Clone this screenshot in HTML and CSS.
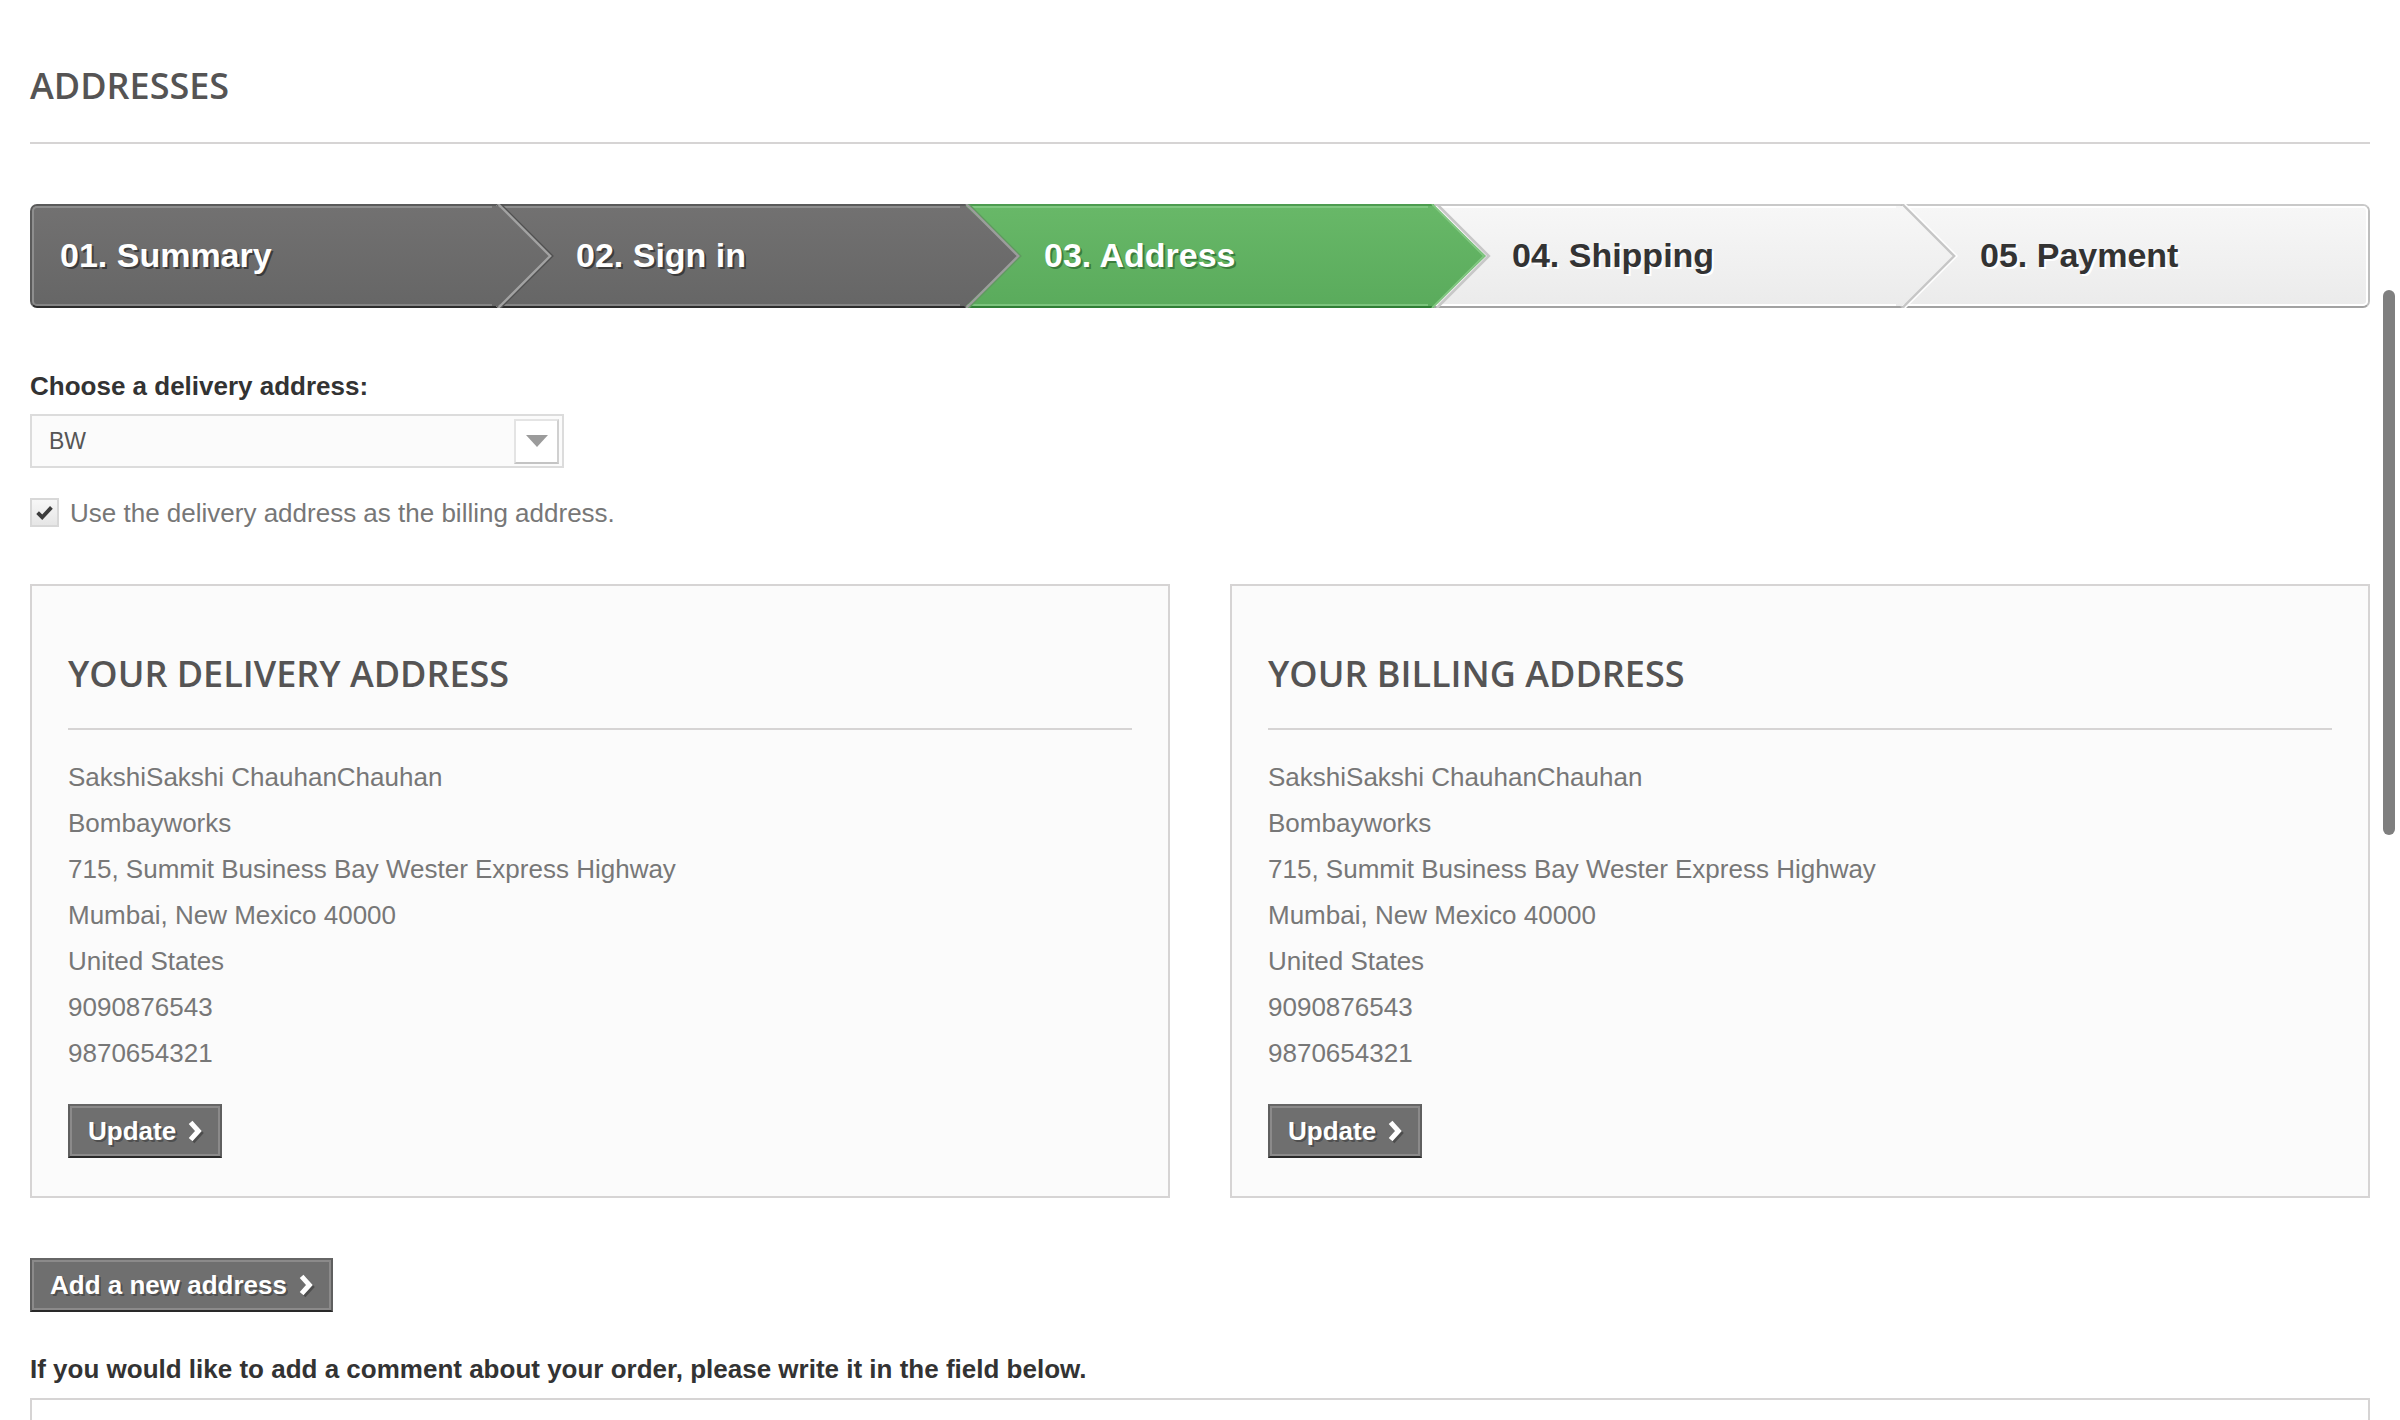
FILE: index.html
```html
<!DOCTYPE html>
<html lang="en">
<head>
<meta charset="utf-8">
<title>Addresses</title>
<link rel="stylesheet" href="styles.css">
</head>
<body>
<div class="page">
  <h1 class="page-heading">Addresses</h1>

  <ul class="steps">
    <li class="step done first">
      <span class="step-label">01. Summary</span>
      <svg class="step-arrow" width="64" height="104" viewBox="0 0 64 104">
        <defs><linearGradient id="gd1" x1="0" y1="0" x2="0" y2="1"><stop offset="0" stop-color="#727171"/><stop offset="1" stop-color="#666666"/></linearGradient></defs>
        <polygon points="0,2 6,2 58,52 6,102 0,102" fill="url(#gd1)"/>
        <polyline points="8.6,0 60.6,52 8.6,104" fill="none" stroke="#505050" stroke-width="1.8"/>
        <polyline points="6.2,0 58.2,52 6.2,104" fill="none" stroke="#a2a2a2" stroke-width="2.4"/>
      </svg>
    </li>
    <li class="step done">
      <span class="step-label">02. Sign in</span>
      <svg class="step-arrow" width="64" height="104" viewBox="0 0 64 104">
        <defs><linearGradient id="gd2" x1="0" y1="0" x2="0" y2="1"><stop offset="0" stop-color="#727171"/><stop offset="1" stop-color="#666666"/></linearGradient></defs>
        <polygon points="0,2 6,2 58,52 6,102 0,102" fill="url(#gd2)"/>
        <polyline points="8.6,0 60.6,52 8.6,104" fill="none" stroke="#5f9a5f" stroke-width="1.8"/>
        <polyline points="6.2,0 58.2,52 6.2,104" fill="none" stroke="#9c9c9c" stroke-width="2.4"/>
      </svg>
    </li>
    <li class="step current">
      <span class="step-label">03. Address</span>
      <svg class="step-arrow" width="64" height="104" viewBox="0 0 64 104">
        <defs><linearGradient id="gc" x1="0" y1="0" x2="0" y2="1"><stop offset="0" stop-color="#68b868"/><stop offset="1" stop-color="#5aab5c"/></linearGradient></defs>
        <polygon points="0,2 6,2 58,52 6,102 0,102" fill="url(#gc)"/>
        <polyline points="8.8,0 60.8,52 8.8,104" fill="none" stroke="#c7c7c7" stroke-width="2.6"/>
        <polyline points="4,0 56,52 4,104" fill="none" stroke="#80c680" stroke-width="2"/>
      </svg>
    </li>
    <li class="step todo">
      <span class="step-label">04. Shipping</span>
      <svg class="step-arrow" width="64" height="104" viewBox="0 0 64 104">
        <defs><linearGradient id="gt" x1="0" y1="0" x2="0" y2="1"><stop offset="0" stop-color="#f7f7f7"/><stop offset="1" stop-color="#ebebeb"/></linearGradient></defs>
        <polygon points="0,2 6,2 58,52 6,102 0,102" fill="url(#gt)"/>
        <polyline points="8.6,0 60.6,52 8.6,104" fill="none" stroke="#ffffff" stroke-width="2"/>
        <polyline points="6.2,0 58.2,52 6.2,104" fill="none" stroke="#c6c6c6" stroke-width="2.4"/>
      </svg>
    </li>
    <li class="step todo last">
      <span class="step-label">05. Payment</span>
    </li>
  </ul>

  <label class="field-label">Choose a delivery address:</label>
  <div class="select">
    <span class="select-value">BW</span>
    <span class="select-btn">
      <svg width="22" height="12" viewBox="0 0 22 12"><polygon points="0,0 22,0 11,12" fill="#9b9b9b"/></svg>
    </span>
  </div>

  <div class="check-row">
    <span class="checkbox">
      <svg width="17" height="15" viewBox="0 0 17 15"><polyline points="1.6,7.6 6.2,12.2 15.4,2.4" fill="none" stroke="#3c3c3c" stroke-width="3.8"/></svg>
    </span>
    <span class="check-text">Use the delivery address as the billing address.</span>
  </div>

  <div class="addresses">
    <div class="address-box">
      <h3 class="address-title">Your delivery address</h3>
      <ul class="address-lines">
        <li>SakshiSakshi ChauhanChauhan</li>
        <li>Bombayworks</li>
        <li>715, Summit Business Bay Wester Express Highway</li>
        <li>Mumbai, New Mexico 40000</li>
        <li>United States</li>
        <li>9090876543</li>
        <li>9870654321</li>
      </ul>
      <div class="box-actions">
        <a class="button" href="#"><span class="button-inner">Update<svg class="chev" width="14" height="22" viewBox="0 0 14 22"><polyline points="2.6,2.4 10.4,11 2.6,19.6" fill="none" stroke="#ffffff" stroke-width="5"/></svg></span></a>
      </div>
    </div>
    <div class="address-box">
      <h3 class="address-title">Your billing address</h3>
      <ul class="address-lines">
        <li>SakshiSakshi ChauhanChauhan</li>
        <li>Bombayworks</li>
        <li>715, Summit Business Bay Wester Express Highway</li>
        <li>Mumbai, New Mexico 40000</li>
        <li>United States</li>
        <li>9090876543</li>
        <li>9870654321</li>
      </ul>
      <div class="box-actions">
        <a class="button" href="#"><span class="button-inner">Update<svg class="chev" width="14" height="22" viewBox="0 0 14 22"><polyline points="2.6,2.4 10.4,11 2.6,19.6" fill="none" stroke="#ffffff" stroke-width="5"/></svg></span></a>
      </div>
    </div>
  </div>

  <div class="page-actions">
    <a class="button" href="#"><span class="button-inner">Add a new address<svg class="chev" width="14" height="22" viewBox="0 0 14 22"><polyline points="2.6,2.4 10.4,11 2.6,19.6" fill="none" stroke="#ffffff" stroke-width="5"/></svg></span></a>
  </div>

  <p class="comment-label">If you would like to add a comment about your order, please write it in the field below.</p>
  <div class="textarea"></div>
</div>
<div class="scroll-thumb"></div>
</body>
</html>
```

FILE: styles.css
```css
* {
  box-sizing: border-box;
}

html,
body {
  margin: 0;
  padding: 0;
  height: 1420px;
  overflow: hidden;
  background: #ffffff;
}

body {
  font-family: "Liberation Sans", Arial, Helvetica, sans-serif;
  font-size: 26px;
  color: #777777;
}

.page {
  padding: 64px 30px 0;
}

.page-heading {
  margin: 0 0 60px;
  padding: 0 0 34px;
  border-bottom: 2px solid #d6d4d4;
  font-family: "Open Sans", sans-serif;
  font-weight: 600;
  font-size: 36px;
  line-height: 44px;
  color: #555454;
  text-transform: uppercase;
}

/* ---------- steps ---------- */
.steps {
  display: flex;
  list-style: none;
  margin: 0 0 60px;
  padding: 0;
}

.step {
  position: relative;
  flex: 0 0 20%;
  border-top: 2px solid;
  border-bottom: 2px solid;
  border-right: 2px solid;
}

.step.first {
  border-left: 2px solid;
  border-radius: 7px 0 0 7px;
}

.step.last {
  border-radius: 0 7px 7px 0;
}

.step-label {
  display: block;
  padding: 26px 20px 28px 76px;
  border: 2px solid;
  font-weight: bold;
  font-size: 34px;
  line-height: 42px;
}

.step.first .step-label {
  padding-left: 26px;
  border-radius: 5px 0 0 5px;
}

.step.last .step-label {
  border-radius: 0 5px 5px 0;
}

.step.done {
  border-color: #5a5a5a #5f5f5f #2c2c2c #5a5a5a;
  background: linear-gradient(#727171, #666666);
}

.step.done .step-label {
  color: #ffffff;
  border-color: #8e8e8e #858585 #858585 #8e8e8e;
  text-shadow: 2px 2px 0 rgba(0, 0, 0, 0.45);
}

.step.current {
  border-color: #4d9c50 #3f9043 #2f7e35 #4d9c50;
  background: linear-gradient(#68b868, #5aab5c);
}

.step.current .step-label {
  color: #ffffff;
  border-color: #80c881 #7cc47d #7cc47d #80c881;
  text-shadow: 2px 2px 0 #3a7d3d;
}

.step.todo {
  border-color: #c9c9c9 #bebebe #a2a2a2 #c9c9c9;
  background: linear-gradient(#f7f7f7, #ebebeb);
}

.step.todo .step-label {
  color: #333333;
  border-color: #ffffff;
  text-shadow: 2px 2px 0 #ffffff;
}

.step-arrow {
  position: absolute;
  z-index: 2;
  top: -2px;
  left: calc(100% - 4px);
  display: block;
}

/* ---------- delivery select ---------- */
.field-label {
  display: block;
  margin: 0 0 10px;
  font-weight: bold;
  line-height: 36px;
  color: #333333;
}

.select {
  display: flex;
  align-items: center;
  width: 534px;
  height: 54px;
  padding: 0 3px 0 17px;
  border: 2px solid #dcdcdc;
  background: #fbfbfb;
}

.select-value {
  flex: 1;
  font-size: 23px;
  line-height: 50px;
  color: #555555;
}

.select-btn {
  display: flex;
  align-items: center;
  justify-content: center;
  width: 45px;
  height: 45px;
  border: 2px solid;
  border-color: #e4e4e4 #d0d0d0 #c4c4c4 #e4e4e4;
  background: #ffffff;
}

.check-row {
  display: flex;
  align-items: center;
  gap: 11px;
  margin-top: 30px;
}

.checkbox {
  display: flex;
  align-items: center;
  justify-content: center;
  width: 29px;
  height: 29px;
  border: 2px solid #d8d8d8;
  background: linear-gradient(#f7f7f7, #e6e6e6);
}

.check-text {
  line-height: 28px;
  color: #777777;
}

/* ---------- address boxes ---------- */
.addresses {
  display: grid;
  grid-template-columns: 1fr 1fr;
  column-gap: 60px;
  margin-top: 57px;
}

.address-box {
  border: 2px solid #d6d4d4;
  background: #fbfbfb;
  padding: 66px 36px 38px;
}

.address-title {
  margin: 0;
  padding: 0 0 32px;
  border-bottom: 2px solid #d6d4d4;
  font-family: "Open Sans", sans-serif;
  font-weight: 600;
  font-size: 36px;
  line-height: 44px;
  color: #555454;
  text-transform: uppercase;
}

.address-lines {
  list-style: none;
  margin: 24px 0 0;
  padding: 0;
  line-height: 46px;
  color: #777777;
}

.box-actions {
  display: flex;
  margin-top: 28px;
}

/* ---------- buttons ---------- */
.button {
  display: flex;
  border: 2px solid;
  border-color: #666666 #5f5f5f #292929 #5f5f5f;
  background: #6f6f6f;
  color: #ffffff;
  font-weight: bold;
  font-size: 26px;
  line-height: 34px;
  text-decoration: none;
  text-shadow: 2px 2px 0 rgba(0, 0, 0, 0.3);
}

.button-inner {
  display: flex;
  align-items: center;
  gap: 12px;
  padding: 6px 16px;
  border: 2px solid #8b8a8a;
}

.chev {
  display: block;
  filter: drop-shadow(2px 2px 0 rgba(0, 0, 0, 0.3));
}

.page-actions {
  display: flex;
  margin-top: 60px;
}

.comment-label {
  margin: 39px 0 0;
  font-weight: bold;
  line-height: 36px;
  color: #333333;
}

.textarea {
  height: 22px;
  margin-top: 11px;
  border: 2px solid #d6d4d4;
  border-bottom: 0;
  background: #ffffff;
}

.scroll-thumb {
  position: fixed;
  top: 290px;
  right: 5px;
  width: 12px;
  height: 545px;
  border-radius: 6px;
  background: #7f7f7f;
}
```
